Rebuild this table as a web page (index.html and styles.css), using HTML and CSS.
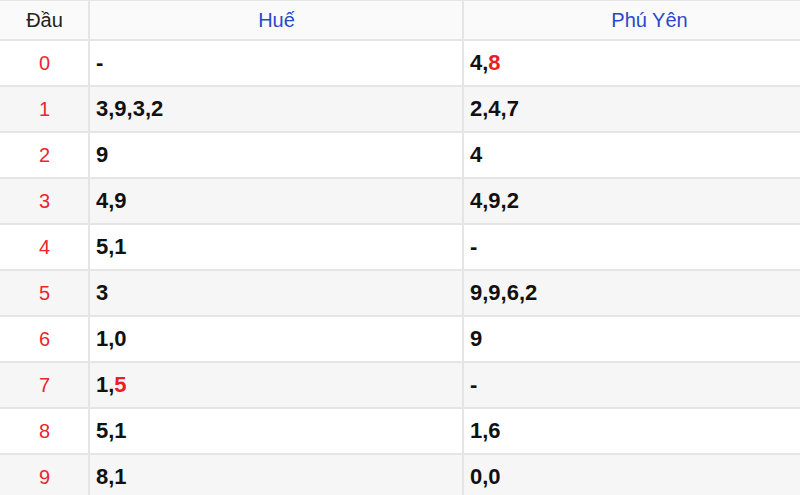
FILE: index.html
```html
<!DOCTYPE html>
<html lang="vi">
<head>
<meta charset="utf-8">
<title>Loto</title>
<link rel="stylesheet" href="styles.css">
</head>
<body>
<table class="loto">
  <thead>
    <tr><th class="c-head">Đầu</th><th class="c-a">Huế</th><th class="c-b">Phú Yên</th></tr>
  </thead>
  <tbody>
    <tr><td class="head">0</td><td>-</td><td>4,<span class="hot">8</span></td></tr>
    <tr><td class="head">1</td><td>3,9,3,2</td><td>2,4,7</td></tr>
    <tr><td class="head">2</td><td>9</td><td>4</td></tr>
    <tr><td class="head">3</td><td>4,9</td><td>4,9,2</td></tr>
    <tr><td class="head">4</td><td>5,1</td><td>-</td></tr>
    <tr><td class="head">5</td><td>3</td><td>9,9,6,2</td></tr>
    <tr><td class="head">6</td><td>1,0</td><td>9</td></tr>
    <tr><td class="head">7</td><td>1,<span class="hot">5</span></td><td>-</td></tr>
    <tr><td class="head">8</td><td>5,1</td><td>1,6</td></tr>
    <tr><td class="head">9</td><td>8,1</td><td>0,0</td></tr>
  </tbody>
</table>
</body>
</html>
```
FILE: styles.css
```css
html, body {
  margin: 0;
  padding: 0;
  background: #fff;
}
body {
  font-family: "Liberation Sans", Arial, sans-serif;
  overflow: hidden;
}
.loto {
  border-collapse: collapse;
  width: 838px;
  table-layout: fixed;
  margin: -1px 0 0 -2px;
}
.loto th, .loto td {
  border: 2px solid #e5e5e5;
  padding: 0 5px 0 6px;
}
.loto th {
  height: 38px;
  font-weight: normal;
  font-size: 20px;
  color: #2b48c8;
  text-align: center;
  background: #fafafa;
}
.loto th.c-head {
  color: #222;
}
.c-head { width: 77px; }
.c-a { width: 361px; }
.loto td {
  height: 44px;
  font-size: 22px;
  font-weight: bold;
  color: #111;
}
.loto td.head {
  text-align: center;
  font-weight: normal;
  font-size: 20px;
  color: #ec2530;
}
.loto tbody tr:nth-child(even) td {
  background: #f6f6f6;
}
.hot {
  color: #ec1c24;
}
```
